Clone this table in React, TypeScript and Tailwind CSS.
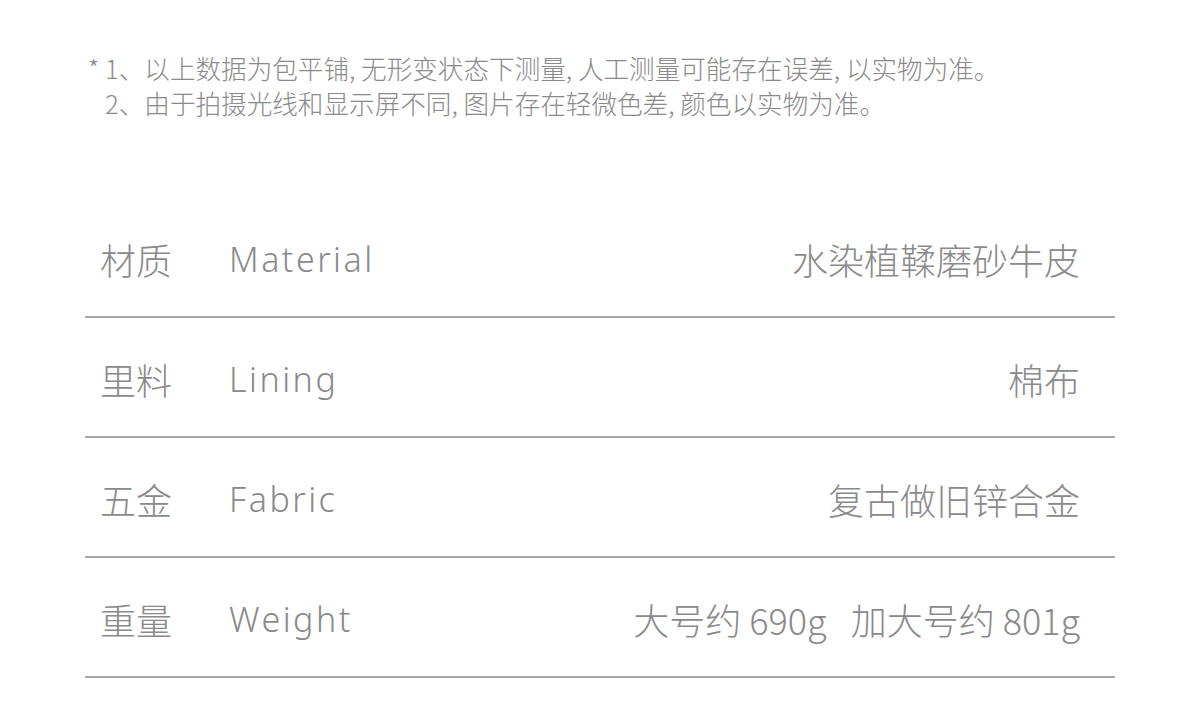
import React from 'react';

interface SpecRow {
  zh: string;
  en: string;
  value: string[];
}

const rows: SpecRow[] = [
  { zh: '材质', en: 'Material', value: ['水染植鞣磨砂牛皮'] },
  { zh: '里料', en: 'Lining', value: ['棉布'] },
  { zh: '五金', en: 'Fabric', value: ['复古做旧锌合金'] },
  { zh: '重量', en: 'Weight', value: ['大号约 690g', '加大号约 801g'] },
];

const cjk = "font-['Noto_Sans_CJK_SC','Noto_Sans',sans-serif]";

const App: React.FC = () => {
  return (
    <div className={`w-[1200px] h-[701px] bg-white overflow-hidden ${cjk} font-light text-[#8a8a8a]`}>
      {/* 说明 */}
      <div className="pt-[50px] pl-[88px] text-[25.6px] leading-[35px]">
        <div className="flex">
          <span className="w-[17px]">*</span>
          <span>1、以上数据为包平铺, 无形变状态下测量, 人工测量可能存在误差, 以实物为准。</span>
        </div>
        <div className="flex">
          <span className="w-[17px]"></span>
          <span>2、由于拍摄光线和显示屏不同, 图片存在轻微色差, 颜色以实物为准。</span>
        </div>
      </div>

      {/* 参数表 */}
      <div className="mt-[78px] mx-[85px]">
        {rows.map((row) => (
          <div
            key={row.zh}
            className="h-[120px] border-b-2 border-[#a8a8a8] flex items-center pt-[4px] pl-[15px] pr-[35px] text-[36px]"
          >
            <span className="w-[129px] shrink-0">{row.zh}</span>
            <span className="font-['Noto_Sans',sans-serif] tracking-[2.5px] text-[34px]">{row.en}</span>
            <span className="ml-auto flex gap-[24px]">
              {row.value.map((v) => (
                <span key={v}>{v}</span>
              ))}
            </span>
          </div>
        ))}
      </div>
    </div>
  );
};

export default App;
